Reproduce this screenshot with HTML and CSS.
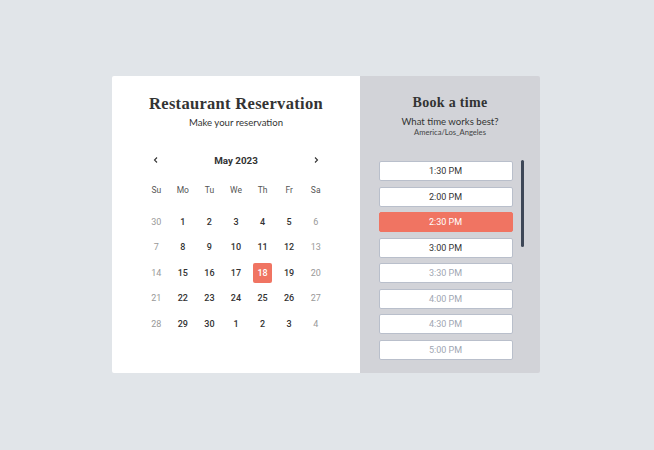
FILE: index.html
```html
<!DOCTYPE html>
<html lang="en">
<head>
    <meta charset="UTF-8">
    <meta name="viewport" content="width=device-width, initial-scale=1.0">
    <title>Restaurant Reservation</title>
    <link rel="stylesheet" href="styles.css">
</head>
<body>
    <div class="card">
        <div class="calendar-side">
            <h2 class="title">Restaurant Reservation</h2>
            <p class="subtitle">Make your reservation</p>

            <div class="month-nav">
                <span class="arrow">
                    <svg width="8" height="8" viewBox="0 0 8 8"><path d="M5 1.5 L2.5 4 L5 6.5" fill="none" stroke="#333" stroke-width="1.1"/></svg>
                </span>
                <span class="month">May 2023</span>
                <span class="arrow">
                    <svg width="8" height="8" viewBox="0 0 8 8"><path d="M3 1.5 L5.5 4 L3 6.5" fill="none" stroke="#333" stroke-width="1.1"/></svg>
                </span>
            </div>

            <div class="weekdays">
                <span>Su</span><span>Mo</span><span>Tu</span><span>We</span><span>Th</span><span>Fr</span><span>Sa</span>
            </div>

            <div class="days" id="days"></div>
        </div>

        <div class="time-side">
            <h2 class="title small">Book a time</h2>
            <p class="subtitle">What time works best?</p>
            <p class="tz">America/Los_Angeles</p>

            <div class="slots-wrap">
                <div class="slots" id="slots"></div>
                <div class="thumb"></div>
            </div>
        </div>
    </div>

    <script>
        // five weeks, Sunday first; weekends are greyed out
        const days = document.getElementById('days');
        const cells = [30];
        for (let d = 1; d <= 30; d++) cells.push(d);
        for (let d = 1; d <= 4; d++) cells.push(d);

        cells.forEach((d, i) => {
            const el = document.createElement('span');
            el.textContent = d;
            const col = i % 7;
            if (col === 0 || col === 6) el.className = 'muted';
            if (i === 18) el.className = 'selected';
            days.appendChild(el);
        });

        const slots = document.getElementById('slots');
        const times = [];
        for (let h = 1; h <= 10; h++) {
            if (h > 1) times.push(h + ':00 PM');
            times.push(h + ':30 PM');
        }
        times.push('11:00 PM');

        times.forEach((t, i) => {
            const b = document.createElement('button');
            b.textContent = t;
            if (i === 2) b.className = 'active';
            else if (i > 3) b.className = 'taken';
            slots.appendChild(b);
        });
    </script>
</body>
</html>
```

FILE: styles.css
```css
body {
    margin: 0;
    height: 100vh;
    display: flex;
    justify-content: center;
    align-items: center;
    background: #e1e5e9;
    font-family: Roboto, "Liberation Sans", sans-serif;
    color: #333;
}
.card {
    display: flex;
    width: 428px;
    height: 297px;
    margin: -1px 0 0 -2px;
    border-radius: 2px;
    overflow: hidden;
}
.calendar-side {
    width: 248px;
    background: white;
    padding-top: 18px;
    display: flex;
    flex-direction: column;
    align-items: center;
}
.time-side {
    width: 180px;
    background: #d2d3d8;
    padding-top: 17px;
    display: flex;
    flex-direction: column;
    align-items: center;
}
.title {
    margin: 0;
    font-family: "Liberation Serif", serif;
    font-size: 16.5px;
    line-height: 20px;
    font-weight: bold;
    color: #333;
    letter-spacing: 0.3px;
}
.title.small {
    font-size: 14px;
}
.subtitle {
    margin: 2px 0 0;
    font-family: Lato, sans-serif;
    font-size: 9.6px;
    line-height: 13px;
    color: #333;
}
.tz {
    margin: 0;
    font-family: Lato, sans-serif;
    font-size: 7.6px;
    line-height: 8px;
    color: #444;
}
.month-nav {
    margin-top: 21px;
    width: 186px;
    height: 20px;
    display: flex;
    justify-content: space-between;
    align-items: center;
}
.arrow {
    width: 26px;
    display: flex;
    justify-content: center;
}
.month {
    font-size: 9.8px;
    font-weight: bold;
}
.weekdays, .days {
    width: 186px;
    display: grid;
    grid-template-columns: repeat(7, 1fr);
    text-align: center;
}
.weekdays {
    margin-top: 10px;
    grid-auto-rows: 20px;
    align-items: center;
    font-size: 8.5px;
    color: #555;
}
.days {
    margin-top: 9px;
    grid-auto-rows: 25.5px;
    align-items: center;
    justify-items: center;
    font-size: 9px;
    font-weight: 500;
}
.days span {
    width: 19px;
    height: 20px;
    line-height: 20px;
    border-radius: 2px;
}
.days .muted {
    color: #999;
    font-weight: normal;
}
.days .selected {
    background: #f07462;
    color: white;
}
.slots-wrap {
    position: relative;
    margin-top: 24px;
    margin-left: 2px;
    width: 145px;
    height: 200px;
}
.slots {
    height: 100%;
    padding-top: 1px;
    box-sizing: border-box;
    overflow-y: auto;
    scrollbar-width: none;
}
/* custom scroll thumb drawn over the right edge of the list */
.thumb {
    position: absolute;
    top: 0;
    right: 0;
    width: 3px;
    height: 87px;
    background: #3e4757;
    border-radius: 2px;
}
.slots button {
    display: block;
    width: 134px;
    height: 20px;
    margin: 0 0 5.5px;
    padding: 0;
    background: white;
    border: 1px solid #b9bfcb;
    border-radius: 2px;
    font-family: Roboto, sans-serif;
    font-size: 9px;
    color: #333;
    cursor: pointer;
}
.slots button.active {
    background: #f07462;
    border-color: #f07462;
    color: white;
}
.slots button.taken {
    color: #a0a6b2;
}
```
